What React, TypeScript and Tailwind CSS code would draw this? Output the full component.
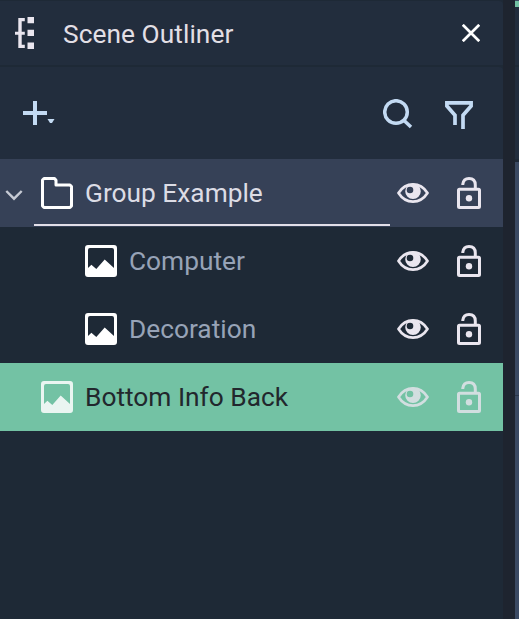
import React from "react";

const TreeIcon = () => (
  <svg width="20" height="34" viewBox="0 0 20 34" fill="#eae6ef">
    <path d="M0 15.700h3.300V2H9.800v3.200H6.700v10.500H9.800v3H6.700v10.100H9.800V32H3.300V18.700H0z" />
    <path d="M12.500 1H19v6.200h-6.500zM12.500 13.800H19V20h-6.500zM12.500 26.600H19V33h-6.500z" />
  </svg>
);

const CloseIcon = () => (
  <svg width="18" height="18" viewBox="0 0 18 18" fill="none" stroke="#fff" strokeWidth="2.700">
    <path d="M.8.8l16.400 16.400M17.200.8L.8 17.200" />
  </svg>
);

const PlusIcon = () => (
  <svg width="32" height="24" viewBox="0 0 32 24" fill="#c3daf3">
    <path d="M10 0h4v10h10v4H14v10h-4V14H0v-4h10zM24.500 18h7L29 22h-2z" />
  </svg>
);

const SearchIcon = () => (
  <svg width="30" height="30" viewBox="0 0 30 30" fill="none" stroke="#c3daf3">
    <circle cx="13" cy="13" r="11.300" strokeWidth="3.500" />
    <path d="M20.800 21.300l7.200 6.700" strokeWidth="3.500" />
  </svg>
);

const FilterIcon = () => (
  <svg width="28" height="28" viewBox="0 0 28 28" fill="none" stroke="#c3daf3" strokeWidth="3.700">
    <path d="M10 24V14.300L1.900 5V1.900h24.200V5L18 14.300V28" />
  </svg>
);

const ChevronIcon = () => (
  <svg width="18" height="12" viewBox="0 0 18 12" fill="none" stroke="#c6cad4" strokeWidth="2.400">
    <path d="M1.300 2l7.700 7.700L16.700 2" />
  </svg>
);

const FolderIcon = () => (
  <svg className="shrink-0" width="32" height="32" viewBox="0 0 32 32" fill="none" stroke="#fff" strokeWidth="3" strokeLinejoin="round">
    <path d="M3 1.500h10.500l1.500 1.800V8H29L30.500 9.500V29L29 30.500H3L1.500 29V3z" />
  </svg>
);

const ImageIcon = ({ dim }: { dim?: boolean }) => (
  <svg className={dim ? "shrink-0 opacity-85" : "shrink-0"} width="32" height="32" viewBox="0 0 32 32" fill="#fff">
    <path
      fillRule="evenodd"
      d="M3 0h26q3 0 3 3v26q0 3-3 3H3q-3 0-3-3V3Q0 0 3 0zM5 3Q3 3 3 5v18l3.400-3.300 4.900 4.300 8.400-9.600L29 23V5q0-2-2-2z"
    />
  </svg>
);

const EyeIcon = () => (
  <svg width="32" height="20" viewBox="0 0 32 20">
    <path
      d="M1.500 10C5 4.500 10 1.400 16 1.400S27 4.500 30.500 10C27 15.500 22 18.600 16 18.600S5 15.500 1.500 10z"
      fill="none"
      stroke="#eae6ef"
      strokeWidth="2.700"
      strokeLinejoin="round"
    />
    <path
      fillRule="evenodd"
      fill="#eae6ef"
      d="M16 .4a7.800 7.800 0 1 0 0 15.600a7.800 7.800 0 0 0 0-15.600zM13 3.700a3.300 3.300 0 1 1 0 6.600a3.300 3.300 0 0 1 0-6.600z"
    />
  </svg>
);

const LockIcon = () => (
  <svg width="24" height="32" viewBox="0 0 24 32" fill="none" stroke="#eae6ef">
    <rect x="1.500" y="12.300" width="21" height="18.200" rx="1" strokeWidth="3" />
    <path d="M5.800 8V7.300Q6.500 1.500 12 1.500Q18.300 1.500 18.300 8v4" strokeWidth="3" />
    <circle cx="12" cy="21.300" r="3.200" fill="#eae6ef" stroke="none" />
  </svg>
);

const RowActions = ({ dim }: { dim?: boolean }) => (
  <div className={"ml-auto flex items-center gap-7 pr-[22px]" + (dim ? " opacity-80" : "")}>
    <EyeIcon />
    <LockIcon />
  </div>
);

export default function App() {
  return (
    <div
      className="flex h-[619px] w-[519px] overflow-hidden bg-[#1e242f] text-[26.300px] leading-8"
      style={{ fontFamily: 'Roboto, "Liberation Sans", sans-serif' }}
    >
      <main className="flex w-[503px] shrink-0 flex-col bg-[#1e2936] pt-px">
        <header className="flex h-16 shrink-0 items-center rounded-tr-[4px] bg-[#222d3d] pr-[23px] pl-[15px]">
          <TreeIcon />
          <h1 className="ml-[28px] pt-[2px] tracking-[0.05px] whitespace-nowrap text-[#e2dfe5]">Scene Outliner</h1>
          <div className="ml-auto">
            <CloseIcon />
          </div>
        </header>
        <div className="mt-[2px] flex h-[92px] shrink-0 items-center rounded-tr-[4px] bg-[#222d3d] pr-[30px] pl-[23px]">
          <PlusIcon />
          <div className="mt-[2px] ml-auto flex items-end gap-[32px]">
            <SearchIcon />
            <FilterIcon />
          </div>
        </div>
        <div className="flex h-[68px] shrink-0 items-center bg-[#364157] pl-[5px]">
          <div className="pt-[3px]">
            <ChevronIcon />
          </div>
          <div className="ml-[11px] flex h-full w-[356px] items-center gap-3 pl-[7px] text-[#dcdce5] shadow-[inset_0_-1px_0_#364157,inset_0_-3px_0_#e2dfe8]">
            <FolderIcon />
            <span>Group Example</span>
          </div>
          <RowActions />
        </div>
        <div className="flex h-[68px] shrink-0 items-center gap-3 pl-[85px] text-[#97a3b7]">
          <ImageIcon />
          <span>Computer</span>
          <RowActions />
        </div>
        <div className="flex h-[68px] shrink-0 items-center gap-3 pl-[85px] text-[#97a3b7]">
          <ImageIcon />
          <span>Decoration</span>
          <RowActions />
        </div>
        <div className="flex h-[68px] shrink-0 items-center gap-3 bg-[#73c2a4] pl-[41px] text-[#22272d]">
          <ImageIcon dim />
          <span>Bottom Info Back</span>
          <RowActions dim />
        </div>
      </main>
      <aside className="ml-3 flex w-1 flex-col bg-[#3b4a63] pt-px">
        <div className="h-[6px] bg-[#73c2a4]" />
        <div className="h-[58px] bg-[#222d3d]" />
        <div className="h-[2px] bg-[#1e2936]" />
        <div className="h-[92px] bg-[#222d3d]" />
        <div className="h-[3px] bg-[#1e2936]" />
        <div className="mt-[233px] h-px bg-[#2b384c]" />
      </aside>
    </div>
  );
}
